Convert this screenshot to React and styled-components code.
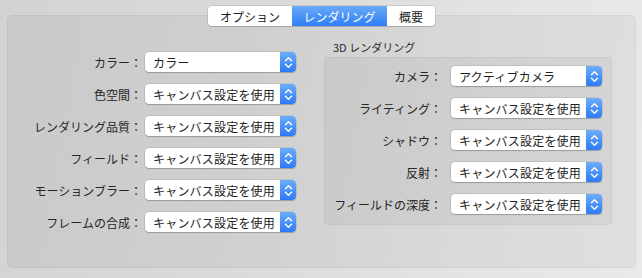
import React from "react";
import styled, { createGlobalStyle } from "styled-components";

const GlobalStyle = createGlobalStyle`
  html, body {
    margin: 0;
    padding: 0;
  }
  body {
    font-family: "Noto Sans CJK JP", "Noto Sans", sans-serif;
    -webkit-font-smoothing: antialiased;
  }
`;

const leftRows = [
  { label: "カラー", value: "カラー" },
  { label: "色空間", value: "キャンバス設定を使用" },
  { label: "レンダリング品質", value: "キャンバス設定を使用" },
  { label: "フィールド", value: "キャンバス設定を使用" },
  { label: "モーションブラー", value: "キャンバス設定を使用" },
  { label: "フレームの合成", value: "キャンバス設定を使用" },
];

const rightRows = [
  { label: "カメラ", value: "アクティブカメラ" },
  { label: "ライティング", value: "キャンバス設定を使用" },
  { label: "シャドウ", value: "キャンバス設定を使用" },
  { label: "反射", value: "キャンバス設定を使用" },
  { label: "フィールドの深度", value: "キャンバス設定を使用" },
];

const tabs = [
  { title: "オプション", width: 84 },
  { title: "レンダリング", width: 95 },
  { title: "概要", width: 48 },
];

const Stepper = () => (
  <StepperBox>
    <svg width="9" height="13" viewBox="0 0 9 13">
      <path
        d="M1.5 4.8 L4.5 1.8 L7.5 4.8 M1.5 8.2 L4.5 11.2 L7.5 8.2"
        fill="none"
        stroke="#fff"
        strokeWidth="1.4"
        strokeLinecap="round"
        strokeLinejoin="round"
      />
    </svg>
  </StepperBox>
);

const PopupRow = ({ label, value, labelWidth, labelGap }) => (
  <Row>
    <Label $width={labelWidth} $gap={labelGap}>{label}：</Label>
    <Popup>
      <PopupText>{value}</PopupText>
      <Stepper />
    </Popup>
  </Row>
);

const App = () => {
  return (
    <Window>
      <GlobalStyle />
      <TabBar>
        {tabs.map((t, i) => (
          <Tab
            key={t.title}
            $width={t.width}
            $active={i === 1}
            $first={i === 0}
            $last={i === tabs.length - 1}
          >
            {t.title}
          </Tab>
        ))}
      </TabBar>
      <Panel>
        <LeftColumn>
          {leftRows.map((r) => (
            <PopupRow key={r.label} {...r} labelWidth={127} labelGap={3} />
          ))}
        </LeftColumn>
        <RightColumn>
          <GroupTitle>3D レンダリング</GroupTitle>
          <GroupBox>
            {rightRows.map((r) => (
              <PopupRow key={r.label} {...r} labelWidth={112} labelGap={9} />
            ))}
          </GroupBox>
        </RightColumn>
      </Panel>
    </Window>
  );
};

const Window = styled.div`
  width: 642px;
  height: 278px;
  box-sizing: border-box;
  padding-top: 6px;
  background: linear-gradient(100deg, #d3d3d3 0%, #dadada 40%, #e4e4e4 75%, #e9e9e9 100%);
  overflow: hidden;
`;

const TabBar = styled.div`
  position: relative;
  z-index: 1;
  display: flex;
  width: fit-content;
  margin: 0 0 -11px 208px;
  height: 20px;
  border-radius: 4px;
  box-shadow: 0 0 0 0.5px rgba(0, 0, 0, 0.18), 0 1px 1px rgba(0, 0, 0, 0.12);
  background: #fff;
`;

const Tab = styled.div`
  display: flex;
  align-items: center;
  justify-content: center;
  width: ${(p) => p.$width}px;
  box-sizing: border-box;
  height: 20px;
  font-size: 12px;
  color: ${(p) => (p.$active ? "#fff" : "#222")};
  background: ${(p) =>
    p.$active ? "linear-gradient(#69aaf8, #2f7ef5)" : "transparent"};
  border-radius: ${(p) => (p.$first ? "4px 0 0 4px" : p.$last ? "0 4px 4px 0" : "0")};
`;

const Panel = styled.div`
  margin: 0 6px 0 7px;
  height: 253px;
  box-sizing: border-box;
  display: flex;
  border-radius: 5px;
  background: rgba(0, 0, 0, 0.045);
  box-shadow: inset 0 0 0 1px rgba(0, 0, 0, 0.035);
`;

const LeftColumn = styled.div`
  display: flex;
  flex-direction: column;
  gap: 12px;
  padding: 37px 0 0 8px;
  width: 288px;
`;

const RightColumn = styled.div`
  display: flex;
  flex-direction: column;
  margin-left: 21px;
  padding-top: 25px;
`;

const GroupTitle = styled.div`
  height: 14px;
  line-height: 14px;
  font-size: 11px;
  color: #2a2a2a;
  padding-left: 9px;
  margin-bottom: 3px;
`;

const GroupBox = styled.div`
  width: 288px;
  height: 168px;
  box-sizing: border-box;
  display: flex;
  flex-direction: column;
  gap: 12px;
  padding: 9px 0 0 6px;
  border-radius: 4px;
  background: rgba(0, 0, 0, 0.04);
  box-shadow: inset 0 0 0 1px rgba(0, 0, 0, 0.03);
`;

const Row = styled.div`
  display: flex;
  align-items: center;
  height: 20px;
`;

const Label = styled.div`
  width: ${(p) => p.$width}px;
  text-align: right;
  font-size: 12px;
  color: #262626;
  white-space: nowrap;
  margin-right: ${(p) => p.$gap}px;
`;

const Popup = styled.div`
  display: flex;
  align-items: stretch;
  width: 151px;
  height: 20px;
  box-sizing: border-box;
  border-radius: 4px;
  background: #fff;
  box-shadow: 0 0 0 0.5px rgba(0, 0, 0, 0.15), 0 1px 1px rgba(0, 0, 0, 0.2);
  overflow: hidden;
`;

const PopupText = styled.div`
  flex: 1;
  display: flex;
  align-items: center;
  padding-left: 8px;
  font-size: 12px;
  color: #1e1e1e;
  white-space: nowrap;
  letter-spacing: 0.2px;
`;

const StepperBox = styled.div`
  width: 16px;
  display: flex;
  align-items: center;
  justify-content: center;
  background: linear-gradient(#6caef9, #2d7bf4);
`;

export default App;
